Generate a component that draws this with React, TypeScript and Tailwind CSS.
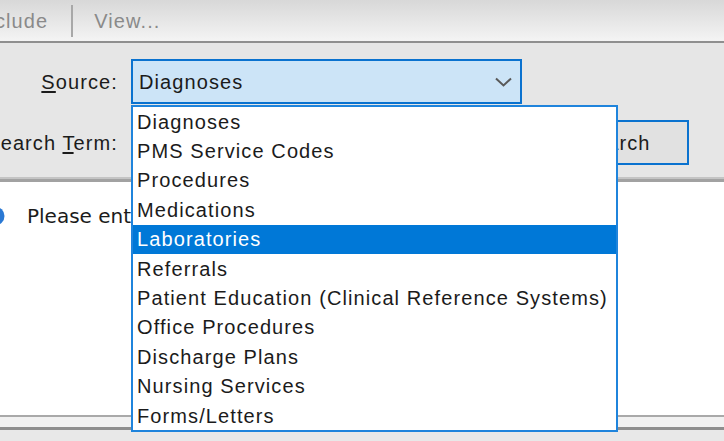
import React from 'react'

const sources = [
    'Diagnoses',
    'PMS Service Codes',
    'Procedures',
    'Medications',
    'Laboratories',
    'Referrals',
    'Patient Education (Clinical Reference Systems)',
    'Office Procedures',
    'Discharge Plans',
    'Nursing Services',
    'Forms/Letters',
]

function Chevron() {
    return (
        <svg width="17" height="10" viewBox="0 0 17 10" fill="none">
            <path d="M1 1.5l7.5 7 7.5-7" stroke="#595959" strokeWidth="2" />
        </svg>
    )
}

function InfoIcon() {
    return (
        <svg width="20" height="20" viewBox="0 0 20 20">
            <circle cx="10" cy="10" r="9.5" fill="#2a79d4" />
            <rect x="9" y="8" width="2" height="7" fill="#fff" />
            <rect x="9" y="4.5" width="2" height="2" fill="#fff" />
        </svg>
    )
}

export default function App() {
    const selected = 'Laboratories'

    return (
        <div className="relative flex h-[441px] w-[724px] flex-col overflow-hidden bg-white font-['Liberation_Sans',Arial,sans-serif] text-[20px] tracking-[1.1px] text-[#1b1b1b]">
            {/* toolbar, scrolled so the first button is partly out of view */}
            <div className="flex h-[43px] shrink-0 items-center border-b-2 border-[#8f8f8f] bg-gradient-to-b from-[#d8d8d8] to-[#f4f4f4] text-[#8a8a8a]">
                <span className="-ml-[24px] whitespace-nowrap">Include</span>
                <div className="ml-[23px] h-[32px] w-[2px] bg-[#a8a8a8]" />
                <span className="ml-[21px] whitespace-nowrap">View...</span>
            </div>

            {/* search panel */}
            <div className="grid h-[134px] shrink-0 grid-cols-[118px_1fr] content-start gap-x-[13px] gap-y-[16px] bg-[#e6e6e6] pt-[16px]">
                <div className="flex items-center justify-end whitespace-nowrap">
                    <span>
                        <u className="underline-offset-2">S</u>ource:
                    </span>
                </div>
                <div className="flex h-[45px] w-[391px] items-center justify-between border-2 border-[#0a72cf] bg-[#cce4f7] pl-[6px] pr-[8px]">
                    <span>Diagnoses</span>
                    <Chevron />
                </div>

                <div className="flex items-center justify-end whitespace-nowrap">
                    <span>
                        Search <u className="underline-offset-2">T</u>erm:
                    </span>
                </div>
                <div className="flex h-[45px] items-center">
                    <div className="h-[45px] w-[399px] border border-[#7a7a7a] bg-white" />
                    <button className="ml-[12px] flex h-[45px] w-[147px] items-center justify-center border-2 border-[#0a72cf] bg-[#e1e1e1]">
                        Search
                    </button>
                </div>
            </div>
            <div className="h-[2px] shrink-0 bg-[#c4c4c4]" />
            <div className="h-[3px] shrink-0 bg-[#a2a2a2]" />

            {/* results area */}
            <div className="flex h-[233px] shrink-0 items-start bg-white pt-[19px]">
                <div className="flex items-center">
                    <div className="-ml-[15px]">
                        <InfoIcon />
                    </div>
                    <span className="ml-[22px] whitespace-nowrap font-['DejaVu_Sans',sans-serif] tracking-normal">
                        Please enter a search term.
                    </span>
                </div>
            </div>

            {/* status strip */}
            <div className="h-[2px] shrink-0 bg-[#a9a9a9]" />
            <div className="h-[10px] shrink-0 bg-[#f1f1f1]" />
            <div className="h-[3px] shrink-0 bg-[#8e8e8e]" />
            <div className="flex-1 bg-[#e8e8e8]" />

            {/* open source dropdown */}
            <ul className="absolute left-[131px] top-[105px] w-[487px] border-2 border-[#1f84dc] bg-white">
                {sources.map((s) => (
                    <li
                        key={s}
                        className={
                            'flex h-[29.4px] items-center whitespace-nowrap px-[4px] ' +
                            (s === selected ? 'bg-[#0078d7] text-white' : '')
                        }
                    >
                        {s}
                    </li>
                ))}
            </ul>
        </div>
    )
}
